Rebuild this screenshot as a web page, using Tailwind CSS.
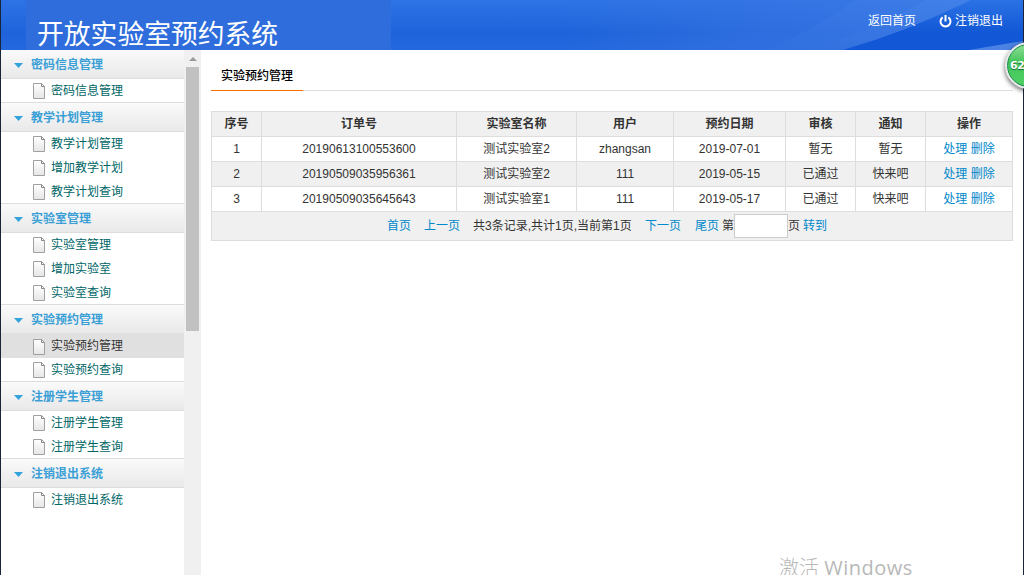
<!DOCTYPE html>
<html lang="zh-CN">
<head>
<meta charset="utf-8">
<title>开放实验室预约系统</title>
<script src="https://cdn.jsdelivr.net/npm/@tailwindcss/browser@4"></script>
</head>
<body class="relative w-[1024px] h-[575px] overflow-hidden bg-white text-[12px] text-[#333] font-['Liberation_Sans','Noto_Sans_CJK_SC',sans-serif]">
<div class="flex flex-col h-full border-x border-[#1a2437]">
  <header class="relative z-10 h-[50px] shrink-0 flex justify-between overflow-hidden bg-linear-to-b from-[#2e74e6] via-[#1e63da] via-65% to-[#2468de]">
    <svg class="absolute inset-0" width="1022" height="50" viewBox="0 0 1022 50">
      <defs>
        <linearGradient id="ray" x1="0" x2="0" y1="0" y2="1"><stop offset="0" stop-color="#4583e9"/><stop offset="1" stop-color="#3371df"/></linearGradient>
        <linearGradient id="deep" x1="0" x2="0" y1="0" y2="1"><stop offset="0" stop-color="#2b72e5"/><stop offset=".65" stop-color="#1257d5"/><stop offset="1" stop-color="#1257d5"/></linearGradient>
        <linearGradient id="fade" x1="0" x2="1" y1="0" y2="0"><stop offset="0" stop-color="#3975e0" stop-opacity="0"/><stop offset=".5" stop-color="#3874e2" stop-opacity=".6"/><stop offset="1" stop-color="#3b79e4" stop-opacity=".75"/></linearGradient>
      </defs>
      <path d="M560 0H972Q905 34 842 50H560Z" fill="url(#fade)"/>
      <path d="M766 50Q815 28 855 0H972Q905 34 842 50Z" fill="url(#ray)" opacity=".35"/>
      <path d="M804 50Q870 32 925 0H972Q905 34 842 50Z" fill="url(#ray)" opacity=".6"/>
      <path d="M842 50Q905 32 970 0H1022V50Z" fill="url(#deep)"/>
      <path d="M968 50L1022 41V50Z" fill="#4b82e3"/>
    </svg>
    <div class="relative ml-[25px] w-[365px] h-full bg-[#2e6ddb] pl-[11px] pt-[15px] text-[26.8px] leading-[40px] text-white whitespace-nowrap">开放实验室预约系统</div>
    <nav class="relative flex items-center h-[40px] pt-px pr-[20px] text-white">
      <a>返回首页</a>
      <svg class="ml-[23px] mr-[3px] mt-px" width="13" height="13" viewBox="0 0 13 13" fill="none" stroke="#fff" stroke-width="2"><path d="M3.7 2.3A5 5 0 1 0 9.3 2.3M6.5 0V6.5"/></svg>
      <a>注销退出</a>
    </nav>
  </header>
  <div class="flex flex-1 min-h-0">
    <aside id="menu" class="w-[183px] h-full -mt-px shrink-0"></aside>
    <div class="w-[17px] shrink-0 bg-[#f0f0f0] flex flex-col items-center pt-[7px]">
      <svg width="8" height="4" viewBox="0 0 8 4"><path d="M4 0L8 4H0Z" fill="#999"/></svg>
      <div class="mt-[6px] w-[13px] h-[264px] bg-[#c1c1c1]"></div>
    </div>
    <main class="pl-[10px] w-[812px]">
      <div class="h-[41px] border-b border-[#ddd] flex">
        <div class="h-[41px] w-[92px] text-center font-medium leading-[53px] border-b border-[#ff6c00] text-black">实验预约管理</div>
      </div>
      <div class="mt-[20px] border-l border-t border-[#ddd]">
        <div id="table" class="grid grid-cols-[50px_195px_120px_97px_112px_70px_70px_87px] text-center"></div>
        <div class="h-[29px] bg-[#f0f0f0] border-r border-b border-[#ddd] flex items-center pl-[175px] pb-px whitespace-nowrap">
          <a class="text-[#08c] w-[37px]">首页</a><a class="text-[#08c] w-[49px]">上一页</a><span class="w-[172px]">共3条记录,共计1页,当前第1页</span><a class="text-[#08c] w-[50px]">下一页</a><a class="text-[#08c] w-[27px]">尾页</a><span>第</span><input class="w-[54px] h-[24px] mt-px bg-white border border-[#ccc]"><span class="w-[15px]">页</span><a class="text-[#08c]">转到</a>
        </div>
      </div>
    </main>
  </div>
</div>
<div class="absolute left-[779px] top-[554px] text-[20px] leading-[27px] text-[#b8b8b8] whitespace-nowrap font-['Open_Sans','Noto_Sans_CJK_SC',sans-serif]"><span class="font-light">激活</span> <span class="tracking-[0.5px]">Windows</span></div>
<div class="absolute z-20 left-[1005px] top-[42px] size-[47px] rounded-full border-2 border-[#e8e8e8] bg-white shadow-[0_2px_5px_rgba(0,0,0,0.6)]">
  <div class="size-full rounded-full border border-[#17874a] bg-linear-to-b from-[#8ade94] via-[#45c65c] via-40% to-[#4fd065] pl-[2px] text-white font-bold text-[11px] leading-[42px] tracking-[-0.5px] [text-shadow:0_1px_1px_#126b30] font-['DejaVu_Sans',sans-serif]">62</div>
</div>
<script>
const groups = [
  ['密码信息管理', ['密码信息管理']],
  ['教学计划管理', ['教学计划管理', '增加教学计划', '教学计划查询']],
  ['实验室管理', ['实验室管理', '增加实验室', '实验室查询']],
  ['实验预约管理', ['实验预约管理', '实验预约查询']],
  ['注册学生管理', ['注册学生管理', '注册学生查询']],
  ['注销退出系统', ['注销退出系统']]
];
const page = `<svg class="mr-[6px] mt-[2px]" width="12" height="16" viewBox="0 0 12 16"><defs><linearGradient id="p" x1="0" y1="0" x2="0" y2="1"><stop offset="0" stop-color="#fff"/><stop offset="1" stop-color="#e6e6e6"/></linearGradient></defs><path d="M.5.5H8.5L11.5 3.5V15.5H.5Z" fill="url(#p)" stroke="#a0a0a0"/><path d="M8.5.5V3.5H11.5" fill="none" stroke="#888"/></svg>`;
document.getElementById('menu').innerHTML = groups.map(([g, items]) =>
  `<div class="h-[30px] -mb-px border-y border-[#ddd] bg-linear-to-b from-[#fafafa] to-[#e9e9e9] flex items-center pl-[13px] font-bold text-[#3a9fd6]"><svg class="mr-[8px] mt-[3px]" width="9" height="5" viewBox="0 0 9 5"><path d="M0 0H9L4.5 5Z" fill="#34a3dc"/></svg><span class="pt-[2px]">${g}</span></div>` +
  items.map(t => t === '实验预约管理'
    ? `<div class="relative h-[25px] -mb-px flex items-center pl-[32px] bg-[#e0e0e0] text-[#333]">${page}<span>${t}</span></div>`
    : `<div class="relative h-[24px] flex items-center pl-[32px] text-[#066]">${page}<span class="pt-px">${t}</span></div>`).join('')
).join('');
const rows = [
  ['序号', '订单号', '实验室名称', '用户', '预约日期', '审核', '通知', '操作'],
  ['1', '20190613100553600', '测试实验室2', 'zhangsan', '2019-07-01', '暂无', '暂无'],
  ['2', '20190509035956361', '测试实验室2', '111', '2019-05-15', '已通过', '快来吧'],
  ['3', '20190509035645643', '测试实验室1', '111', '2019-05-17', '已通过', '快来吧']
];
document.getElementById('table').innerHTML = rows.map((r, i) => {
  const cells = i ? [...r, '<a class="text-[#08c]">处理</a> <a class="text-[#08c]">删除</a>'] : r;
  return cells.map(c => `<div class="h-[25px] border-r border-b border-[#ddd] ${i % 2 ? 'bg-white' : 'bg-[#f0f0f0]'} ${i ? 'leading-[25px]' : 'font-bold leading-[25px]'}">${c}</div>`).join('');
}).join('');
</script>
</body>
</html>
